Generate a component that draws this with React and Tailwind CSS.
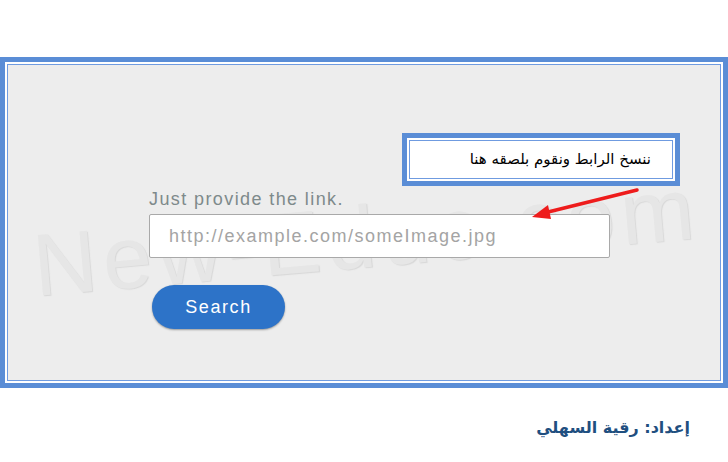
import React from 'react'

function Arrow() {
  return (
    <svg className="absolute left-[512px] top-[120px]" width="124" height="40" viewBox="0 0 124 40">
      <line x1="117" y1="5" x2="24" y2="28" stroke="#ee1c1c" strokeWidth="3.5" strokeLinecap="round" />
      <polygon points="12,32 28,20 31,34" fill="#ee1c1c" />
    </svg>
  )
}

function App() {
  return (
    <div className="w-[728px] h-[462px] bg-white overflow-hidden" style={{ fontFamily: '"Liberation Sans", Arial, sans-serif' }}>
      <div className="h-[57px]" />

      {/* framed screenshot */}
      <div className="h-[331px] border-[5px] border-[#5a8dd6] bg-white">
        <div className="h-full border-2 border-white">
          <div className="relative h-full border border-[#6f9be0] bg-[#ededed] overflow-hidden">
            {/* watermark */}
            <div aria-hidden="true" className="absolute left-[24px] top-[128px] whitespace-nowrap text-[88px] leading-none text-[#e6e6e6] -rotate-[5deg] tracking-[6px] select-none [text-shadow:1px_1px_1px_#d8d8d8]">
              New-Educ.com
            </div>

            <div className="relative flex flex-col">
              {/* callout */}
              <div className="ml-[394px] mt-[68px] w-[278px] h-[53px] bg-[#5a8dd6] p-[5px]">
                <div className="h-full bg-white p-[2px]">
                  <div className="h-full border border-[#6f9be0] bg-white flex items-center justify-end pr-[21px]">
                    <span dir="rtl" className="text-[15px] text-black" style={{ fontFamily: '"DejaVu Sans", sans-serif' }}>
                      ننسخ الرابط ونقوم بلصقه  هنا
                    </span>
                  </div>
                </div>
              </div>

              <div className="ml-[141px] mt-[1px] text-[18px] tracking-[1.4px] text-[#7e8a8b] leading-[24px]">Just provide the link.</div>

              <div className="ml-[141px] mt-[3px] w-[461px] h-[44px] bg-white border border-[#a9a9a9] rounded-[2px] flex items-center pl-[19px]">
                <span className="text-[18px] tracking-[1.5px] text-[#a4a4a4]">http://example.com/someImage.jpg</span>
              </div>

              <div className="ml-[144px] mt-[27px] w-[133px] h-[44px] rounded-full bg-[#2d73c8] shadow-[0_1px_2px_rgba(0,0,0,0.35)] flex items-center justify-center">
                <span className="text-[18px] tracking-[1.6px] text-white">Search</span>
              </div>
            </div>

            <Arrow />
          </div>
        </div>
      </div>

      {/* credit */}
      <div className="flex justify-end pr-[38px] pt-[28px]">
        <span dir="rtl" className="text-[16px] font-bold text-[#1f4f80]" style={{ fontFamily: '"DejaVu Sans", sans-serif' }}>
          إعداد: رقية السهلي
        </span>
      </div>
    </div>
  )
}

export default App
